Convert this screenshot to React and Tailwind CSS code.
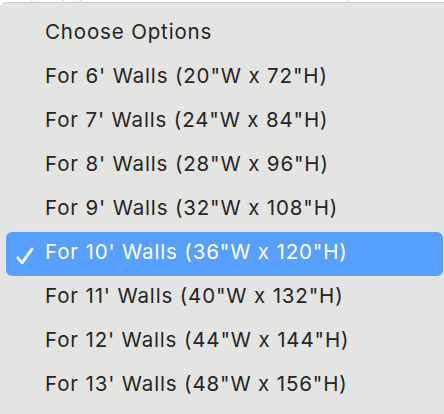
const options = [
  "Choose Options",
  "For 6' Walls (20\"W x 72\"H)",
  "For 7' Walls (24\"W x 84\"H)",
  "For 8' Walls (28\"W x 96\"H)",
  "For 9' Walls (32\"W x 108\"H)",
  "For 10' Walls (36\"W x 120\"H)",
  "For 11' Walls (40\"W x 132\"H)",
  "For 12' Walls (44\"W x 144\"H)",
  "For 13' Walls (48\"W x 156\"H)",
];

const selected = 5;

function Check() {
  return (
    <svg width="18" height="18" viewBox="0 0 18 18" fill="none">
      <path
        d="M1.8 10.8 L6.2 15.8 L16 2"
        stroke="white"
        strokeWidth="2.8"
        strokeLinecap="round"
        strokeLinejoin="round"
      />
    </svg>
  );
}

export default function App() {
  return (
    <div
      className="w-[444px] h-[414px] overflow-hidden bg-white"
      style={{ fontFamily: "Inter, 'Noto Sans', sans-serif" }}
    >
      <div className="h-[2px] overflow-hidden">
        <div className="flex gap-[36px] pl-[15px] -mt-[13px] text-[15px] leading-[16px] text-[#222]">
          <span>Material Selection</span>
          <span>FW</span>
          <span>Free Kitchen Wall</span>
        </div>
      </div>
      <div className="h-[412px] bg-[#e4e4e3] rounded-tl-[7px] border-t border-[#c8c8c8] pt-[9px] pl-[6px] pr-[1px]">
        {options.map((label, i) => (
          <div
            key={label}
            className={
              i === selected
                ? "h-[44px] flex items-center rounded-[6px] bg-[#58a0fd] text-white"
                : "h-[44px] flex items-center text-[#262626]"
            }
          >
            <div className="w-[39px] flex pl-[10px] pt-[4px]">
              {i === selected && <Check />}
            </div>
            <span className="text-[20.5px] tracking-[0.85px] -mt-[3px]">{label}</span>
          </div>
        ))}
      </div>
    </div>
  );
}
